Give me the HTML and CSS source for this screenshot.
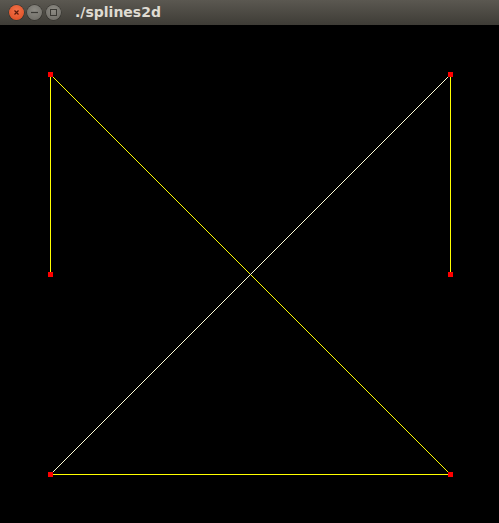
FILE: index.html
```html
<!DOCTYPE html>
<html>
<head>
<meta charset="utf-8">
<link rel="stylesheet" href="styles.css">
</head>
<body>
<div class="window">
  <div class="titlebar">
    <div class="buttons">
      <span class="btn close">
        <svg width="15" height="15" viewBox="0 0 15 15"><path d="M5.5 5.5 L9.5 9.5 M9.5 5.5 L5.5 9.5" stroke="#5a1a0a" stroke-width="1.2"/></svg>
      </span>
      <span class="btn">
        <svg width="15" height="15" viewBox="0 0 15 15"><path d="M4 7.5 H11" stroke="#3a3934" stroke-width="1.2"/></svg>
      </span>
      <span class="btn">
        <svg width="15" height="15" viewBox="0 0 15 15"><rect x="4.5" y="4.5" width="6" height="6" fill="none" stroke="#3a3934" stroke-width="1"/></svg>
      </span>
    </div>
    <span class="title">./splines2d</span>
  </div>
  <svg class="canvas" width="499" height="498" viewBox="0 0 499 498" shape-rendering="crispEdges">
    <line x1="50.5" y1="249.5" x2="50.5" y2="49.5" stroke="#ffff00" stroke-width="1"/>
    <line x1="50.5" y1="49.5" x2="450.5" y2="449.5" stroke="#ffff00" stroke-width="1"/>
    <line x1="450.5" y1="449.5" x2="50.5" y2="449.5" stroke="#ffff00" stroke-width="1"/>
    <line x1="50.5" y1="449.5" x2="450.5" y2="49.5" stroke="#ffffd8" stroke-width="1"/>
    <line x1="450.5" y1="49.5" x2="450.5" y2="249.5" stroke="#ffff00" stroke-width="1"/>
    <rect x="48" y="47" width="5" height="5" fill="#ff0000"/>
    <rect x="448" y="47" width="5" height="5" fill="#ff0000"/>
    <rect x="48" y="247" width="5" height="5" fill="#ff0000"/>
    <rect x="448" y="247" width="5" height="5" fill="#ff0000"/>
    <rect x="48" y="447" width="5" height="5" fill="#ff0000"/>
    <rect x="448" y="447" width="5" height="5" fill="#ff0000"/>
  </svg>
</div>
</body>
</html>
```
FILE: styles.css
```css
html, body {
  margin: 0;
  padding: 0;
  background: #000;
  overflow: hidden;
}
.window {
  width: 499px;
  height: 523px;
  display: flex;
  flex-direction: column;
}
.titlebar {
  height: 25px;
  flex: none;
  display: flex;
  align-items: center;
  background: linear-gradient(#5b5851, #3e3c36);
  box-sizing: border-box;
  padding-left: 9px;
}
.buttons {
  display: flex;
  gap: 3px;
  margin-top: -1px;
}
.btn {
  width: 15px;
  height: 15px;
  border-radius: 50%;
  display: block;
  background: radial-gradient(circle at 50% 35%, #8d8b84, #6a6862);
  box-shadow: 0 0 0 0.5px #2f2e2a;
}
.btn svg {
  display: block;
}
.btn.close {
  background: radial-gradient(circle at 50% 35%, #f4724a, #d94a1e);
}
.buttons .btn + .btn + .btn {
  margin-left: 1px;
}
.title {
  margin-left: 14px;
  font-family: "DejaVu Sans", sans-serif;
  font-weight: bold;
  font-size: 14px;
  color: #dfdbd2;
  margin-top: -1px;
}
.canvas {
  display: block;
  flex: none;
}
```
